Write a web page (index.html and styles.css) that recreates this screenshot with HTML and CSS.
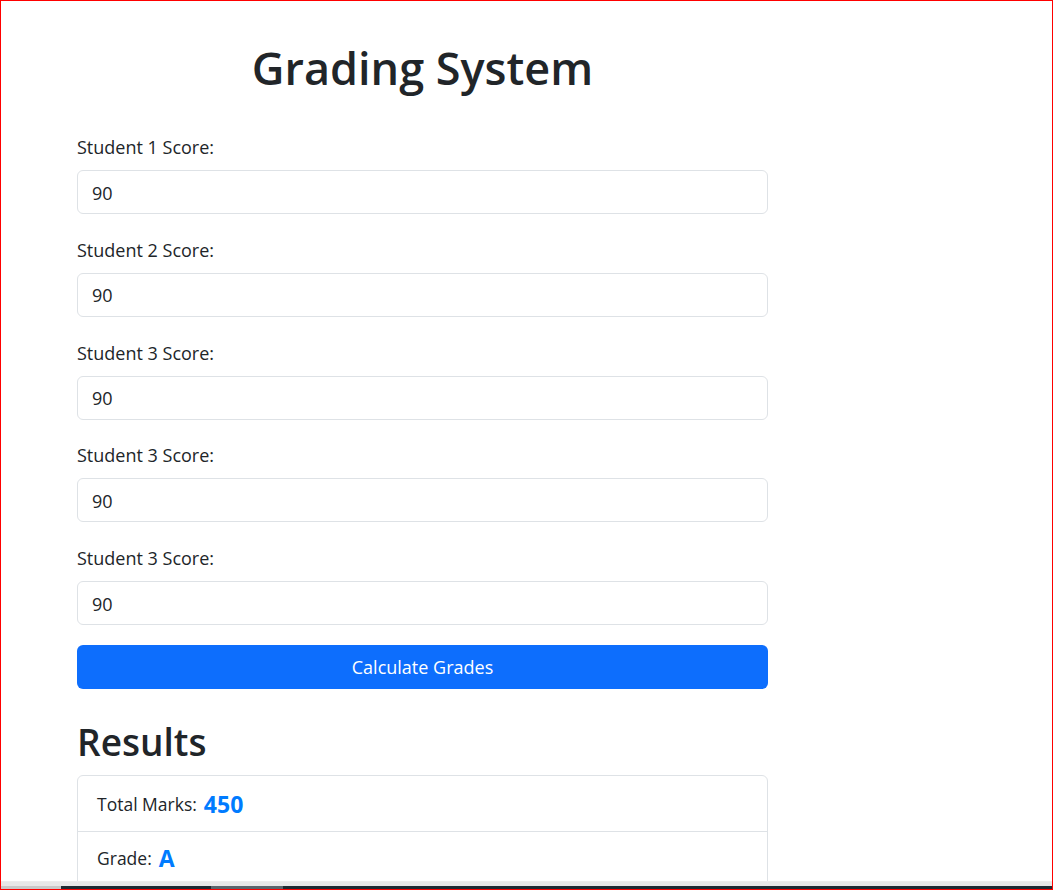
FILE: index.html
```html
<!DOCTYPE html>
<html lang="en">
<head>
<meta charset="utf-8">
<title>Grading System</title>
<link rel="stylesheet" href="styles.css">
</head>
<body>
<div class="frame">
  <div class="viewport">
    <main class="app">
      <h1 class="title">Grading System</h1>
      <form class="score-form">
        <div class="field">
          <label class="field-label" for="s1">Student 1 Score:</label>
          <input class="field-input" id="s1" type="text" value="90">
        </div>
        <div class="field">
          <label class="field-label" for="s2">Student 2 Score:</label>
          <input class="field-input" id="s2" type="text" value="90">
        </div>
        <div class="field">
          <label class="field-label" for="s3">Student 3 Score:</label>
          <input class="field-input" id="s3" type="text" value="90">
        </div>
        <div class="field">
          <label class="field-label" for="s4">Student 3 Score:</label>
          <input class="field-input" id="s4" type="text" value="90">
        </div>
        <div class="field field-last">
          <label class="field-label" for="s5">Student 3 Score:</label>
          <input class="field-input" id="s5" type="text" value="90">
        </div>
        <button class="btn-primary" type="button">Calculate Grades</button>
      </form>
      <h2 class="results-title">Results</h2>
      <ul class="results">
        <li class="result-item">Total Marks: <strong class="result-value">450</strong></li>
        <li class="result-item">Grade: <strong class="result-value">A</strong></li>
      </ul>
    </main>
  </div>
  <div class="hscroll">
    <span class="hscroll-a"></span>
    <span class="hscroll-gap"></span>
    <span class="hscroll-b"></span>
    <span class="hscroll-rest"></span>
  </div>
</div>
</body>
</html>
```

FILE: styles.css
```css
* { box-sizing: border-box; }

html, body {
  margin: 0;
  padding: 0;
  background: #fff;
}

body {
  font-family: "Open Sans", "Noto Sans", sans-serif;
  color: #212529;
}

.frame {
  width: 1053px;
  height: 890px;
  border: 1px solid #ff0000;
  display: flex;
  flex-direction: column;
  overflow: hidden;
}

.viewport {
  flex: 1;
  overflow: hidden;
  border-bottom: 1px solid #ececec;
}

.app {
  width: 691px;
  margin-left: 76px;
  padding-top: 39px;
}

.title {
  margin: 0 0 39px;
  font-size: 45px;
  line-height: 55px;
  font-weight: 600;
  text-align: center;
}

.score-form {
  margin: 0;
}

.field {
  margin-bottom: 22.75px;
}

.field-last {
  margin-bottom: 20px;
}

.field-label {
  display: block;
  font-size: 18px;
  line-height: 27px;
  margin-bottom: 9px;
}

.field-input {
  display: block;
  width: 100%;
  height: 44px;
  padding: 1px 14px 0;
  font-family: inherit;
  font-size: 18px;
  color: #212529;
  border: 1px solid #dee2e6;
  border-radius: 6px;
  background: #fff;
  outline: none;
}

.btn-primary {
  display: block;
  width: 100%;
  height: 44px;
  border: 0;
  border-radius: 6px;
  background: #0d6efd;
  color: #fff;
  font-family: inherit;
  font-size: 18px;
}

.results-title {
  margin: 29px 0 9px;
  font-size: 37px;
  line-height: 48px;
  font-weight: 600;
}

.results {
  list-style: none;
  margin: 0;
  padding: 0;
  border: 1px solid #dee2e6;
  border-radius: 6px;
}

.result-item {
  height: 55px;
  padding: 0 19px;
  display: flex;
  align-items: center;
  gap: 7px;
  font-size: 17.5px;
}

.result-item + .result-item {
  border-top: 1px solid #dee2e6;
  padding-bottom: 2px;
}

.result-value {
  font-size: 23px;
  font-weight: 700;
  color: #007bff;
}

.hscroll {
  flex: none;
  height: 7px;
  background: #e8e8e8;
  display: flex;
  align-items: flex-end;
}

.hscroll span {
  height: 3px;
}

.hscroll-a { width: 60px; background: #c9c9c9; }
.hscroll-gap { width: 150px; background: #1f2b33; }
.hscroll-b { width: 72px; background: #5b666d; }
.hscroll-rest { flex: 1; background: #1f2b33; }
```
